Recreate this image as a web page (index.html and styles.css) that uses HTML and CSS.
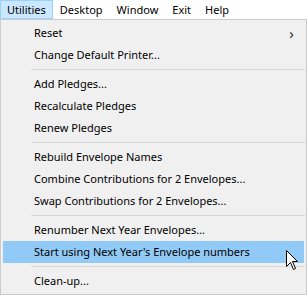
FILE: index.html
```html
<!DOCTYPE html>
<html lang="en">
<head>
    <meta charset="UTF-8">
    <meta name="viewport" content="width=device-width, initial-scale=1.0">
    <title>Utilities menu</title>
    <link rel="stylesheet" href="styles.css">
</head>
<body>
    <div class="barra">
        <span class="topo ativo">Utilities</span>
        <span class="topo">Desktop</span>
        <span class="topo">Window</span>
        <span class="topo">Exit</span>
        <span class="topo">Help</span>
    </div>

    <div class="menu">
        <div class="item">Reset <span class="seta">&#8250;</span></div>
        <div class="item">Change Default Printer...</div>
        <div class="sep"></div>
        <div class="item">Add Pledges...</div>
        <div class="item">Recalculate Pledges</div>
        <div class="item">Renew Pledges</div>
        <div class="sep"></div>
        <div class="item">Rebuild Envelope Names</div>
        <div class="item">Combine Contributions for 2 Envelopes...</div>
        <div class="item">Swap Contributions for 2 Envelopes...</div>
        <div class="sep"></div>
        <div class="item">Renumber Next Year Envelopes...</div>
        <div class="item hover">Start using Next Year's Envelope numbers</div>
        <div class="sep"></div>
        <div class="item">Clean-up...</div>

        <!-- mouse pointer over the highlighted item -->
        <svg class="cursor" width="13" height="21" viewBox="0 0 13 21">
            <path d="M0.5 0.5 L0.5 16.5 L4.5 12.5 L7.5 19.5 L9.5 18.5 L6.5 11.5 L11.5 11.5 Z" fill="#fff" stroke="#000" stroke-width="1"/>
        </svg>
    </div>
</body>
</html>
```

FILE: styles.css
```css
body {
    font-family: "Noto Sans", "Open Sans", sans-serif;
    font-size: 11px;
    color: #000;
    background-color: #fff;
    margin: 0;
    padding: 0;
    width: 307px;
    height: 295px;
    overflow: hidden;
}

.barra {
    display: flex;
    height: 19px;
    background-color: #fff;
}

.topo {
    padding: 0 6px;
    line-height: 17px;
    border: 1px solid transparent;
}

.topo.ativo {
    background-color: #cce8ff;
    border-color: #99d1ff;
}

/* menu suspenso */
.menu {
    position: relative;
    width: 305px;
    padding: 2px 0;
    background-color: #f0f0f0;
    border: 1px solid #cccccc;
}

.item {
    display: flex;
    align-items: center;
    height: 22px;
    margin: 0 2px;
    padding-left: 31px;
    line-height: 22px;
}

.item.hover {
    background-color: #91c9f7;
}

.seta {
    margin-left: auto;
    margin-right: 10px;
    font-size: 15px;
    color: #333;
}

.sep {
    height: 7px;
    margin-left: 30px;
    margin-right: 1px;
    background: linear-gradient(#d7d7d7, #d7d7d7) no-repeat 0 3px / 100% 1px;
}

.cursor {
    position: absolute;
    left: 285px;
    top: 230px;
}
```
